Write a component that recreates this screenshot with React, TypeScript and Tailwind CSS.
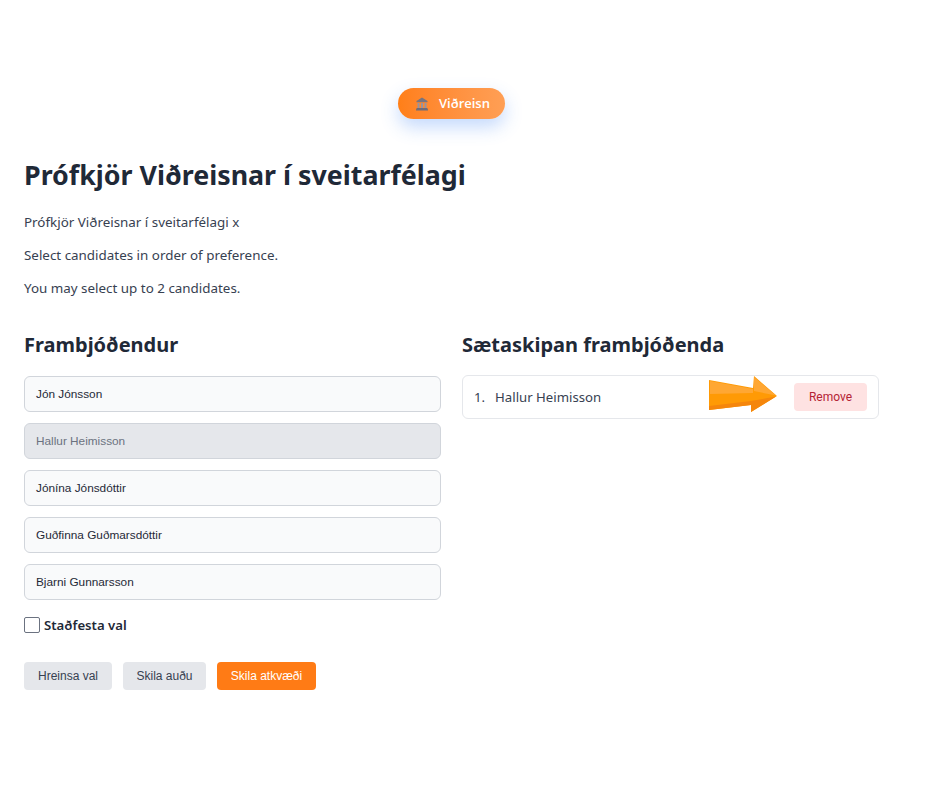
import React from 'react';

const candidates = [
    { name: 'Jón Jónsson' },
    { name: 'Hallur Heimisson', selected: true },
    { name: 'Jónína Jónsdóttir' },
    { name: 'Guðfinna Guðmarsdóttir' },
    { name: 'Bjarni Gunnarsson' },
];

const BankIcon = () => (
    <svg viewBox="0 0 14 14" className="w-[14px] h-[14px]">
        <path d="M7 0.5 12.5 4v1.2h-11V4z" fill="#77747f" />
        <path d="M2.5 6h2v5h-2zM6 6h2v5H6zM9.5 6h2v5h-2z" fill="#96939f" />
        <path d="M1.5 11h11v1.2h-11zM1 12.2h12v1.3H1z" fill="#6f6c78" />
    </svg>
);

const ArrowIcon = () => (
    <svg viewBox="0 0 69 36" className="w-[69px] h-[36px]">
        <path d="M0 4 44 12 45 0 68 20 42 36 42 29 0 34z" fill="#ff9a05" />
        <path d="M1 5 44 13 44 17 1 18z" fill="#ffa733" />
        <path d="M45 1 67 19.5 45 15z" fill="#ffa733" />
        <path d="M0 30 42 25 67 20.5 42 36 42 29 0 34z" fill="#f5860c" />
    </svg>
);

export default function App() {
    return (
        <div className="min-h-[788px] bg-white pl-6 pr-[61px] pt-[88px] font-['Noto_Sans',sans-serif] text-[#1f2937]">
            <div className="flex justify-center">
                <div className="flex h-[31px] w-[107px] items-center gap-[10px] rounded-full bg-gradient-to-r from-[#ff7f17] to-[#ff9f55] pl-[17px] shadow-[0_8px_18px_rgba(59,130,246,0.3)]">
                    <BankIcon />
                    <span className="font-['Open_Sans',sans-serif] text-[13px] font-semibold text-white">Viðreisn</span>
                </div>
            </div>

            <h1 className="mt-[36px] text-[26.8px] leading-[40px] font-bold">Prófkjör Viðreisnar í sveitarfélagi</h1>
            <div className="mt-[17px] flex flex-col gap-[12px] text-[13.4px] leading-[21px] text-[#374151]">
                <p>Prófkjör Viðreisnar í sveitarfélagi x</p>
                <p>Select candidates in order of preference.</p>
                <p>You may select up to 2 candidates.</p>
            </div>

            <div className="mt-[31px] grid grid-cols-2 gap-[21px]">
                <div>
                    <h2 className="text-[20px] leading-[30px] font-bold">Frambjóðendur</h2>
                    <div className="mt-[16px] flex flex-col gap-[11px]">
                        {candidates.map((c) => (
                            <div
                                key={c.name}
                                className={`flex h-[36px] items-center rounded-md border border-[#d1d5db] px-[11px] pt-[2px] font-['Liberation_Sans',sans-serif] text-[11.8px] ${c.selected ? 'bg-[#e5e7eb] text-[#6b7280]' : 'bg-[#f9fafb] text-[#1f2937]'}`}
                            >
                                {c.name}
                            </div>
                        ))}
                    </div>
                    <label className="mt-[16px] flex items-center gap-[4px]">
                        <span className="h-[16px] w-[16px] rounded-[2px] border border-[#6b7280] bg-white" />
                        <span className="text-[13.2px] leading-[18px] font-semibold">Staðfesta val</span>
                    </label>
                    <div className="mt-[28px] flex gap-[11px] font-['Liberation_Sans',sans-serif] text-[12px]">
                        <button className="h-[28px] w-[88px] rounded bg-[#e5e7eb] text-[#374151]">Hreinsa val</button>
                        <button className="h-[28px] w-[83px] rounded bg-[#e5e7eb] text-[#374151]">Skila auðu</button>
                        <button className="h-[28px] w-[99px] rounded bg-[#ff7b15] text-white">Skila atkvæði</button>
                    </div>
                </div>

                <div>
                    <h2 className="text-[20px] leading-[30px] font-bold">Sætaskipan frambjóðenda</h2>
                    <div className="relative mt-[15px] flex h-[44px] items-center justify-between rounded-md border border-[#e5e7eb] bg-white px-[11px] text-[13.2px] text-[#374151]">
                        <div className="flex gap-[10px] pt-[2px]">
                            <span>1.</span>
                            <span>Hallur Heimisson</span>
                        </div>
                        <button className="h-[28px] w-[73px] rounded bg-[#fee2e2] font-['Roboto',sans-serif] text-[12px] text-[#b42335]">Remove</button>
                        <div className="absolute left-[246px] top-[0px]">
                            <ArrowIcon />
                        </div>
                    </div>
                </div>
            </div>
        </div>
    );
}
